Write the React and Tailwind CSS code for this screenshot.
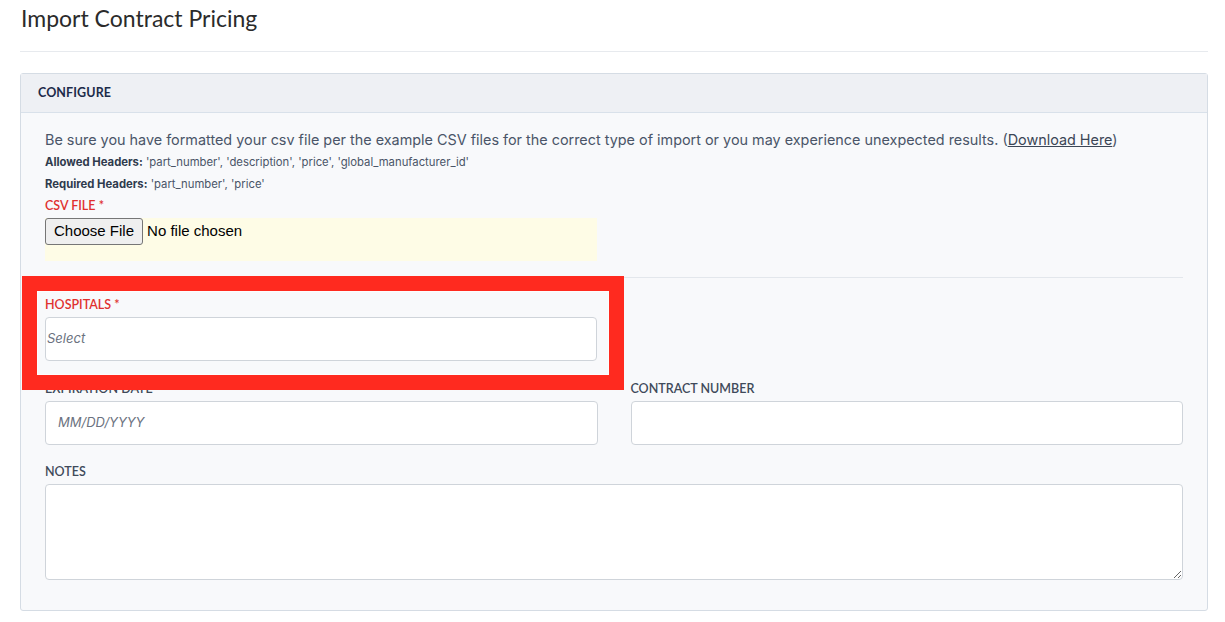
import React from "react";

const sans = { fontFamily: "Inter, 'Liberation Sans', sans-serif" };

function Label({ children, required, className = "" }) {
  return (
    <div
      className={`h-4 leading-4 text-[12.5px] font-semibold uppercase ${required ? "text-[#e0312f]" : "text-[#3f4a5a]"} ${className}`}
      style={{ fontFamily: "Lato, 'Liberation Sans', sans-serif" }}
    >
      {children}
      {required && <span> *</span>}
    </div>
  );
}

export default function App() {
  return (
    <div className="relative min-h-[622px] bg-white pl-5 pr-[17px]" style={sans}>
      <h1
        className="pt-[3px] h-[52px] pl-px text-[23px] leading-[30px] text-[#2b2b2b] border-b border-[#e7eaee]"
        style={{ fontFamily: "Lato, 'Liberation Sans', sans-serif" }}
      >
        Import Contract Pricing
      </h1>

      <div className="mt-[21px] border border-[#d5dce4] rounded-[3px] bg-[#f8f9fb]">
        <div
          className="h-[39px] flex items-center px-[17px] bg-[#eef0f4] border-b border-[#d9e1ea] text-[12.5px] font-bold text-[#1c2b4a] tracking-[0.1px]"
          style={{ fontFamily: "Lato, 'Liberation Sans', sans-serif" }}
        >
          CONFIGURE
        </div>

        <div className="px-6 pt-[17px] pb-[30px] flex flex-col">
          <p className="h-5 leading-5 text-[14.4px] text-[#4a5568]">
            Be sure you have formatted your csv file per the example CSV files for the correct type of import or you may experience unexpected results. (
            <span className="underline text-[#3b4656]">Download Here</span>)
          </p>
          <p className="mt-[2px] h-5 leading-5 text-[11.3px] text-[#4a5568]">
            <span className="font-bold text-[#2f3b4d]">Allowed Headers:</span> 'part_number', 'description', 'price', 'global_manufacturer_id'
          </p>
          <p className="mt-[2px] h-5 leading-5 text-[11.3px] text-[#4a5568]">
            <span className="font-bold text-[#2f3b4d]">Required Headers:</span> 'part_number', 'price'
          </p>
          <Label required className="mt-[4px]">CSV File</Label>
          <div className="mt-[4px] w-[552px] h-[43px] bg-[#fefce6] flex items-start">
            <div
              className="h-[27px] px-[8px] flex items-center border border-[#767676] rounded-[3px] bg-[#efefef] text-[15px] text-black"
              style={{ fontFamily: "'Liberation Sans', Arial, sans-serif" }}
            >
              Choose File
            </div>
            <div
              className="h-[27px] flex items-center pl-[4px] text-[15px] text-black"
              style={{ fontFamily: "'Liberation Sans', Arial, sans-serif" }}
            >
              No file chosen
            </div>
          </div>

          <div className="mt-[16px] border-t border-[#e3e7ec]" />

          <Label required className="mt-[19px]">Hospitals</Label>
          <div className="mt-[4px] w-[552px] h-[44px] bg-white border border-[#cfd4da] rounded-[4px] flex items-center pl-px text-[13px] italic text-[#6b7280]">
            Select
          </div>

          <div className="mt-[20px] grid grid-cols-2 gap-x-[33px]">
            <div>
              <Label>Expiration Date</Label>
              <div className="mt-[4px] h-[44px] bg-white border border-[#cfd4da] rounded-[4px] flex items-center pl-3 text-[13px] italic text-[#6b7280]">
                MM/DD/YYYY
              </div>
            </div>
            <div>
              <Label>Contract Number</Label>
              <div className="mt-[4px] h-[44px] bg-white border border-[#cfd4da] rounded-[4px]" />
            </div>
          </div>

          <Label className="mt-[19px]">Notes</Label>
          <textarea className="mt-[4px] h-[96px] w-full bg-white border border-[#cfd4da] rounded-[4px] outline-none" />
        </div>
      </div>

      <div className="absolute left-[22px] top-[276px] w-[602px] h-[114px] border-[15px] border-[#ff2a1f] pointer-events-none">
        <div className="absolute inset-0 border border-white/70" />
      </div>
    </div>
  );
}
